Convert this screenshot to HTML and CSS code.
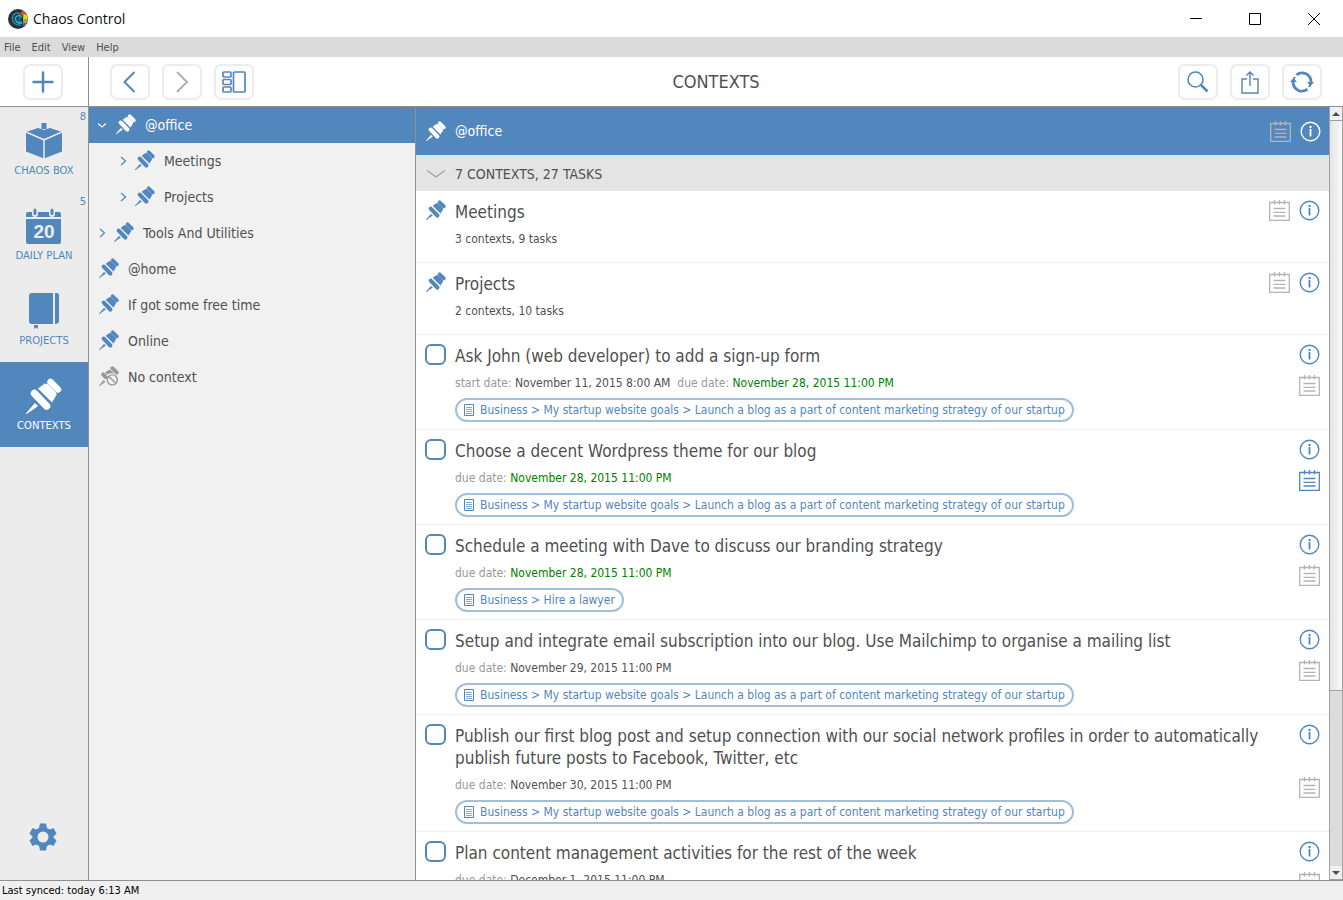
FILE: index.html
```
<!DOCTYPE html>
<html lang="en">

<head>
    <meta charset="UTF-8">
    <meta name="viewport" content="width=device-width, initial-scale=1.0">
    <title>Chaos Control</title>
    <link rel="stylesheet" href="styles.css">
</head>

<body>

    <!-- shared icons -->
    <svg class="sprite" width="0" height="0">
        <symbol id="pin" viewBox="0 0 36 36">
            <path d="M0 36L9 25.500L11.500 28Z" fill="currentColor" stroke="currentColor" />
            <path d="M8.500 15.500L20.500 28" stroke="currentColor" stroke-width="7.500" stroke-linecap="round" />
            <path d="M24.500 4L32 11.500" stroke="currentColor" stroke-width="6.500" stroke-linecap="round" />
            <path d="M19 5.500L21.500 6L30.500 15L30.500 17L26 24.500L12 10.500Z" fill="currentColor" />
        </symbol>
        <symbol id="nopin" viewBox="0 0 36 36">
            <path d="M0 36L8 26L11 28.500Z" fill="currentColor" stroke="currentColor" />
            <path d="M7.500 15L12 20" stroke="currentColor" stroke-width="7" stroke-linecap="round" />
            <path d="M24 4L32 12" stroke="currentColor" stroke-width="7" stroke-linecap="round" />
            <path d="M19.500 6.500L28 14C21 12 16 14 14 16L11.500 11Z" fill="currentColor" />
            <circle cx="24" cy="25" r="9" stroke="currentColor" stroke-width="2.500" fill="none" />
            <path d="M18 19L30 31" stroke="currentColor" stroke-width="2.500" />
        </symbol>
        <symbol id="info" viewBox="0 0 21 21">
            <circle cx="10.500" cy="10.500" r="9.300" fill="none" stroke="currentColor" stroke-width="1.400" />
            <circle cx="10.500" cy="6" r="1.200" fill="currentColor" />
            <path d="M10.500 8V15.500" fill="none" stroke="currentColor" stroke-width="1.800" />
        </symbol>
        <symbol id="notes" viewBox="0 0 21 21">
            <path d="M.7 2.500H20.300V20.300H.7ZM5.500 0V4.500M10.500 0V4.500M15.500 0V4.500M4.500 8.500H16.500M4.500 12.300H16.500M4.500 16H16.500" fill="none" stroke="currentColor" stroke-width="1.300" />
        </symbol>
        <symbol id="doc" viewBox="0 0 12 12">
            <path d="M1.500 .5H10.500V11.500H1.500Z" fill="none" stroke="currentColor" stroke-width="1" />
            <path d="M3 3.500H9M3 5.500H9M3 7.500H9M3 9.500H9" fill="none" stroke="currentColor" stroke-width=".7" />
        </symbol>
        <symbol id="right" viewBox="0 0 8 10">
            <path d="M1 1L5.500 5L1 9" fill="none" stroke="currentColor" stroke-width="1.200" />
        </symbol>
        <symbol id="down" viewBox="0 0 8 10">
            <path d="M0 3.500L4 7L8 3.500" fill="none" stroke="currentColor" stroke-width="1.200" />
        </symbol>
    </svg>

    <header class="titlebar">
        <svg width="20" height="20" viewBox="0 0 20 20" fill="none">
            <circle cx="10" cy="10" r="10" fill="#2d3135" />
            <path d="M14 1.500L17.500 4L15.500 7L13 5Z" fill="#e8562a" />
            <path d="M15.500 5L18.500 5.500L20 10H15Z" fill="#f4d21f" />
            <path d="M15 10H20L19 14L15 14Z" fill="#7db843" />
            <path d="M14 14H19L16 18Z" fill="#7a55a5" />
            <path d="M13 5C8 2.500 4 5.500 4.500 10C5 14 8 16.500 13 16" stroke="#1791b5" stroke-width="1.400" />
            <path d="M14 7.500C10 5.500 7 7.500 7.500 10.500C8 13 10 14.500 14 14" stroke="#1cb3dc" stroke-width="1.600" />
            <path d="M14 9C11.500 8.500 10.500 9.500 10.700 11C11 12.500 12.500 12.800 14 12.500" stroke="#1791b5" stroke-width="1.200" />
        </svg>
        <h1>Chaos Control</h1>
        <div class="window-buttons">
            <button type="button" aria-label="Minimize"><svg width="12" height="12" stroke="#000"><path d="M0 5.500H12" /></svg></button>
            <button type="button" aria-label="Maximize"><svg width="12" height="12" stroke="#000" fill="none"><path d="M.5 .5H11.500V11.500H.5Z" /></svg></button>
            <button type="button" aria-label="Close"><svg width="12" height="12" stroke="#000"><path d="M0 0L12 12M12 0L0 12" /></svg></button>
        </div>
    </header>

    <nav class="menubar">
        <a href="#">File</a>
        <a href="#">Edit</a>
        <a href="#">View</a>
        <a href="#">Help</a>
    </nav>

    <div class="toolbar">
        <div class="toolbar-add">
            <button type="button" class="tool" aria-label="Add"><svg width="22" height="22" stroke="currentColor" stroke-width="2.500" stroke-linecap="round"><path d="M1.500 11H20.500M11 1.500V20.500" /></svg></button>
        </div>
        <div class="toolbar-main">
            <button type="button" class="tool" aria-label="Back"><svg width="22" height="22" fill="none" stroke="currentColor" stroke-width="2"><path d="M15.500 1L5.500 11L15.500 21" /></svg></button>
            <button type="button" class="tool disabled" aria-label="Forward"><svg width="22" height="22" fill="none" stroke="currentColor" stroke-width="2"><path d="M6 1L16 11L6 21" /></svg></button>
            <button type="button" class="tool" aria-label="Layout"><svg width="24" height="22" fill="none" stroke="currentColor" stroke-width="1.700"><rect x="1" y="1" width="8" height="5" rx="1" /><rect x="1" y="8.500" width="8" height="5" rx="1" /><rect x="1" y="16" width="8" height="5" rx="1" /><rect x="11.500" y="1" width="11.500" height="20" rx="1" /></svg></button>
            <h2>CONTEXTS</h2>
            <button type="button" class="tool" aria-label="Search"><svg width="22" height="22" fill="none" stroke="currentColor"><circle cx="8.500" cy="8.500" r="7.500" stroke-width="1.600" /><path d="M14 14L20.500 20.500" stroke-width="2.500" /></svg></button>
            <button type="button" class="tool" aria-label="Share"><svg width="22" height="24" fill="none" stroke="currentColor" stroke-width="1.400"><path d="M8 9H3V23H19V9H14M11 16V2M7.500 5.500L11 2L14.500 5.500" /></svg></button>
            <button type="button" class="tool" aria-label="Sync">
                <svg width="24" height="22" fill="none" stroke="currentColor" stroke-width="2.800">
                    <path d="M6.500 3.800A9 9 0 0 1 21 11M17.500 18.200A9 9 0 0 1 3 11" />
                    <path d="M17 11H24L20.500 15ZM0 11H7L3.500 7Z" fill="currentColor" stroke="none" />
                    <path d="M3.500 9A9 9 0 0 1 5 6M20.500 13A9 9 0 0 1 19 16" stroke-width="2" />
                </svg>
            </button>
        </div>
    </div>

    <main class="content">
        <nav class="sidebar">
            <a class="nav-item" href="#">
                <span class="badge">8</span>
                <svg width="36" height="36" fill="currentColor">
                    <path d="M15.500 0H20.500V6H15.500Z" />
                    <path d="M0 9L12 5L18 7L24 5L36 9L18 16Z" />
                    <path d="M0 9L18 17V35.500L0 28.500ZM36 9L18 17V35.500L36 28.500Z" />
                    <path d="M0 9L18 17L36 9M18 17V36" fill="none" stroke="#ececec" stroke-width="1.500" />
                </svg>
                <span>CHAOS BOX</span>
            </a>
            <a class="nav-item" href="#">
                <span class="badge">5</span>
                <svg width="36" height="36" fill="currentColor">
                    <path d="M0 11H35V34Q35 36 33 36H2Q0 36 0 34ZM2 4H33Q35 4 35 6V9H0V6Q0 4 2 4Z" />
                    <path d="M9 1V6M26 1V6" fill="none" stroke="#ececec" stroke-width="6" stroke-linecap="round" />
                    <path d="M9 2V5.500M26 2V5.500" fill="none" stroke="currentColor" stroke-width="3" stroke-linecap="round" />
                    <text class="day" x="18" y="30" text-anchor="middle">20</text>
                </svg>
                <span>DAILY PLAN</span>
            </a>
            <a class="nav-item" href="#">
                <svg width="36" height="36" fill="currentColor">
                    <path d="M6 0H27V31H6Q3 31 3 28V3Q3 0 6 0ZM29 0H31Q33 0 33 3V28Q33 31 29 31ZM8 32H12V36L10 34.500L8 36Z" />
                </svg>
                <span>PROJECTS</span>
            </a>
            <a class="nav-item active" href="#">
                <svg width="36" height="36"><use href="#pin" /></svg>
                <span>CONTEXTS</span>
            </a>
            <button type="button" class="settings" aria-label="Settings">
                <svg width="28" height="28" viewBox="0 0 28 28">
                    <path d="M11 .5H17L18 5L21 6.500L24.500 5L27.500 10.500L24.500 13.500V14.500L27.500 17.500L24.500 23L21 21.500L18 23L17 27.500H11L10 23L7 21.500L3.500 23L.5 17.500L3.500 14.500V13.500L.5 10.500L3.500 5L7 6.500L10 5ZM14 8.500A5.500 5.500 0 1 0 14 19.500A5.500 5.500 0 1 0 14 8.500Z" fill="currentColor" fill-rule="evenodd" />
                </svg>
            </button>
        </nav>

        <ul class="tree">
            <li class="selected"><svg class="arrow"><use href="#down" /></svg><svg class="pin"><use href="#pin" /></svg>@office</li>
            <li class="child"><svg class="arrow"><use href="#right" /></svg><svg class="pin"><use href="#pin" /></svg>Meetings</li>
            <li class="child"><svg class="arrow"><use href="#right" /></svg><svg class="pin"><use href="#pin" /></svg>Projects</li>
            <li><svg class="arrow"><use href="#right" /></svg><svg class="pin"><use href="#pin" /></svg>Tools And Utilities</li>
            <li><svg class="pin"><use href="#pin" /></svg>@home</li>
            <li><svg class="pin"><use href="#pin" /></svg>If got some free time</li>
            <li><svg class="pin"><use href="#pin" /></svg>Online</li>
            <li><svg class="pin none"><use href="#nopin" /></svg>No context</li>
        </ul>

        <section class="details">
            <div class="details-head">
                <svg class="pin"><use href="#pin" /></svg>
                <h3>@office</h3>
                <button type="button" class="icon muted" aria-label="Notes"><svg><use href="#notes" /></svg></button>
                <button type="button" class="icon" aria-label="Info"><svg><use href="#info" /></svg></button>
            </div>
            <div class="summary">
                <svg width="18" height="8" fill="none" stroke="#a0a0a0" stroke-width="1.200"><path d="M0 .5L9 7L18 .5" /></svg>
                7 CONTEXTS, 27 TASKS
            </div>

            <article class="row group">
                <svg class="pin"><use href="#pin" /></svg>
                <div class="row-text">
                    <h4>Meetings</h4>
                    <p>3 contexts, 9 tasks</p>
                </div>
                <div class="row-icons">
                    <button type="button" class="icon muted" aria-label="Notes"><svg><use href="#notes" /></svg></button>
                    <button type="button" class="icon" aria-label="Info"><svg><use href="#info" /></svg></button>
                </div>
            </article>
            <article class="row group">
                <svg class="pin"><use href="#pin" /></svg>
                <div class="row-text">
                    <h4>Projects</h4>
                    <p>2 contexts, 10 tasks</p>
                </div>
                <div class="row-icons">
                    <button type="button" class="icon muted" aria-label="Notes"><svg><use href="#notes" /></svg></button>
                    <button type="button" class="icon" aria-label="Info"><svg><use href="#info" /></svg></button>
                </div>
            </article>

            <article class="row">
                <input type="checkbox" id="task1">
                <div class="row-text">
                    <h4><label for="task1">Ask John (web developer) to add a sign-up form</label></h4>
                    <p><span>start date:</span> November 11, 2015 8:00 AM &nbsp;<span>due date:</span> <b>November 28, 2015 11:00 PM</b></p>
                    <a class="tag" href="#"><svg><use href="#doc" /></svg>Business &gt; My startup website goals &gt; Launch a blog as a part of content marketing strategy of our startup</a>
                </div>
                <div class="row-icons">
                    <button type="button" class="icon" aria-label="Info"><svg><use href="#info" /></svg></button>
                    <button type="button" class="icon muted" aria-label="Notes"><svg><use href="#notes" /></svg></button>
                </div>
            </article>
            <article class="row">
                <input type="checkbox" id="task2">
                <div class="row-text">
                    <h4><label for="task2">Choose a decent Wordpress theme for our blog</label></h4>
                    <p><span>due date:</span> <b>November 28, 2015 11:00 PM</b></p>
                    <a class="tag" href="#"><svg><use href="#doc" /></svg>Business &gt; My startup website goals &gt; Launch a blog as a part of content marketing strategy of our startup</a>
                </div>
                <div class="row-icons">
                    <button type="button" class="icon" aria-label="Info"><svg><use href="#info" /></svg></button>
                    <button type="button" class="icon" aria-label="Notes"><svg><use href="#notes" /></svg></button>
                </div>
            </article>
            <article class="row">
                <input type="checkbox" id="task3">
                <div class="row-text">
                    <h4><label for="task3">Schedule a meeting with Dave to discuss our branding strategy</label></h4>
                    <p><span>due date:</span> <b>November 28, 2015 11:00 PM</b></p>
                    <a class="tag" href="#"><svg><use href="#doc" /></svg>Business &gt; Hire a lawyer</a>
                </div>
                <div class="row-icons">
                    <button type="button" class="icon" aria-label="Info"><svg><use href="#info" /></svg></button>
                    <button type="button" class="icon muted" aria-label="Notes"><svg><use href="#notes" /></svg></button>
                </div>
            </article>
            <article class="row">
                <input type="checkbox" id="task4">
                <div class="row-text">
                    <h4><label for="task4">Setup and integrate email subscription into our blog. Use Mailchimp to organise a mailing list</label></h4>
                    <p><span>due date:</span> November 29, 2015 11:00 PM</p>
                    <a class="tag" href="#"><svg><use href="#doc" /></svg>Business &gt; My startup website goals &gt; Launch a blog as a part of content marketing strategy of our startup</a>
                </div>
                <div class="row-icons">
                    <button type="button" class="icon" aria-label="Info"><svg><use href="#info" /></svg></button>
                    <button type="button" class="icon muted" aria-label="Notes"><svg><use href="#notes" /></svg></button>
                </div>
            </article>
            <article class="row">
                <input type="checkbox" id="task5">
                <div class="row-text">
                    <h4><label for="task5">Publish our first blog post and setup connection with our social network profiles in order to automatically publish future posts to Facebook, Twitter, etc</label></h4>
                    <p><span>due date:</span> November 30, 2015 11:00 PM</p>
                    <a class="tag" href="#"><svg><use href="#doc" /></svg>Business &gt; My startup website goals &gt; Launch a blog as a part of content marketing strategy of our startup</a>
                </div>
                <div class="row-icons">
                    <button type="button" class="icon" aria-label="Info"><svg><use href="#info" /></svg></button>
                    <button type="button" class="icon muted" aria-label="Notes"><svg><use href="#notes" /></svg></button>
                </div>
            </article>
            <article class="row last">
                <input type="checkbox" id="task6">
                <div class="row-text">
                    <h4><label for="task6">Plan content management activities for the rest of the week</label></h4>
                    <p><span>due date:</span> December 1, 2015 11:00 PM</p>
                </div>
                <div class="row-icons">
                    <button type="button" class="icon" aria-label="Info"><svg><use href="#info" /></svg></button>
                    <button type="button" class="icon muted" aria-label="Notes"><svg><use href="#notes" /></svg></button>
                </div>
            </article>
        </section>

        <div class="scrollbar">
            <button type="button" aria-label="Scroll up"><svg width="8" height="4"><path d="M0 4L4 0L8 4Z" fill="#505050" /></svg></button>
            <div class="track">
                <div class="thumb"></div>
            </div>
            <button type="button" aria-label="Scroll down"><svg width="8" height="4"><path d="M0 0L4 4L8 0Z" fill="#505050" /></svg></button>
        </div>
    </main>

    <footer class="statusbar">Last synced: today 6:13 AM</footer>

</body>

</html>
```
FILE: styles.css
```
* {
    box-sizing: border-box;
}

body {
    margin: 0;
    height: 100vh;
    display: flex;
    flex-direction: column;
    overflow: hidden;
    background: #fff;
    color: #505050;
    font-family: Tahoma, "DejaVu Sans Condensed", "Noto Sans", sans-serif;
    font-size: 14px;
}

h1, h2, h3, h4, p, ul {
    margin: 0;
    padding: 0;
    font-weight: normal;
}

a {
    color: inherit;
    text-decoration: none;
}

button {
    display: flex;
    align-items: center;
    justify-content: center;
    padding: 0;
    border: 0;
    background: none;
    color: #5287bd;
}

svg {
    flex: none;
    display: block;
}

.sprite {
    position: absolute;
}

/* window */
.titlebar {
    display: flex;
    align-items: center;
    flex: none;
    height: 37px;
    padding-left: 8px;
    gap: 5px;
}

.titlebar h1 {
    flex: 1;
    color: #111;
    font-family: "Segoe UI", "Open Sans", sans-serif;
    font-size: 14px;
}

.window-buttons {
    display: flex;
}

.window-buttons button {
    width: 59px;
    height: 36px;
}

.menubar {
    display: flex;
    align-items: center;
    flex: none;
    height: 20px;
    padding-left: 4px;
    gap: 11px;
    background: #dbdbdb;
    font-size: 11px;
}

/* toolbar */
.toolbar {
    display: flex;
    flex: none;
    height: 50px;
    border-bottom: 1px solid #8f8f8f;
}

.toolbar-add {
    display: flex;
    align-items: center;
    justify-content: center;
    width: 89px;
    padding-right: 2px;
    border-right: 1px solid #8f8f8f;
}

.toolbar-main {
    display: flex;
    flex: 1;
    align-items: center;
    gap: 12px;
    padding: 0 21px;
}

.toolbar h2 {
    flex: 1;
    text-align: center;
    font-size: 18px;
}

.tool {
    width: 40px;
    height: 36px;
    border: 2px solid #ececec;
    border-radius: 7px;
}

.tool.disabled {
    color: #b0b0b0;
}

.content {
    display: flex;
    flex: 1;
    min-height: 0;
}

/* left navigation */
.sidebar {
    display: flex;
    flex-direction: column;
    align-items: stretch;
    width: 89px;
    border-right: 1px solid #8f8f8f;
    background: #ececec;
}

.nav-item {
    position: relative;
    display: flex;
    flex-direction: column;
    align-items: center;
    gap: 6px;
    height: 85px;
    padding-top: 16px;
    color: #5287bd;
    font-family: Tahoma, "DejaVu Sans", sans-serif;
    font-size: 10px;
    line-height: 12px;
}

.nav-item.active {
    background: #5287bd;
    color: #fff;
}

.badge {
    position: absolute;
    top: 4px;
    right: 2px;
}

.day {
    fill: #ececec;
    font-family: "Liberation Sans", Arial, sans-serif;
    font-size: 19px;
    font-weight: bold;
}

.settings {
    margin: auto 2px 29px 0;
}

/* contexts tree */
.tree {
    width: 327px;
    border-right: 1px solid #8f8f8f;
    background: #f1f1f1;
    list-style: none;
}

.tree li {
    display: flex;
    align-items: center;
    height: 36px;
    padding-left: 10px;
}

.tree .child {
    padding-left: 31px;
}

.tree .selected {
    padding-left: 9px;
    background: #5287bd;
    color: #fff;
}

.pin {
    width: 20px;
    height: 20px;
    color: #5287bd;
}

.tree .pin {
    margin: 0 9px 2px 0;
}

.selected .pin, .selected .arrow, .details-head .pin {
    color: #fff;
}

.pin.none {
    color: #999;
}

.arrow {
    width: 8px;
    height: 10px;
    margin-right: 7px;
    color: #5287bd;
}

.selected .arrow {
    margin-right: 10px;
}

/* task list */
.details {
    flex: 1;
    min-width: 0;
    overflow: hidden;
}

.details-head, .summary {
    display: flex;
    align-items: center;
}

.details-head {
    gap: 9px;
    height: 48px;
    padding: 0 8px 0 10px;
    background: #5287bd;
    color: #fff;
}

.details-head h3 {
    flex: 1;
    font-size: 14px;
}

.details-head .icon {
    color: #fff;
}

.summary {
    gap: 10px;
    height: 36px;
    padding: 1px 0 0 11px;
    background: #e4e4e4;
}

.row {
    display: flex;
    align-items: flex-start;
    gap: 9px;
    padding: 9px 9px 7px;
    border-bottom: 1px solid #efefef;
}

.row.group {
    padding: 9px 9px 15px 10px;
}

.row.last {
    padding-bottom: 38px;
}

.row-text {
    flex: 1;
    min-width: 0;
    padding-top: 1px;
}

.row h4 {
    font-size: 17px;
    line-height: 22px;
}

.row p {
    margin-top: 8px;
    font-size: 12px;
    line-height: 16px;
}

.row p span {
    color: #999;
}

.row p b {
    color: #008000;
    font-weight: normal;
}

.row input {
    appearance: none;
    flex: none;
    width: 21px;
    height: 21px;
    margin: 0;
    border: 2px solid #5287bd;
    border-radius: 6px;
    background: #fff;
}

.row-icons {
    display: flex;
    flex-direction: column;
    align-self: stretch;
    justify-content: space-between;
    padding-bottom: 26px;
}

.group .row-icons {
    flex-direction: row;
    gap: 9px;
    padding: 0;
}

.last .row-icons {
    justify-content: flex-start;
    gap: 10px;
    padding: 0;
}

.icon, .icon svg {
    width: 21px;
    height: 21px;
}

.icon.muted, .details-head .icon.muted {
    color: #b4b4b4;
}

.tag {
    display: inline-flex;
    align-items: center;
    gap: 5px;
    height: 24px;
    margin-top: 7px;
    padding: 0 7px 0 6px;
    border: 2px solid #a0bfde;
    border-radius: 12px;
    color: #5287bd;
    font-size: 12px;
    vertical-align: top;
}

.tag svg {
    width: 12px;
    height: 12px;
}

.scrollbar {
    display: flex;
    flex-direction: column;
    width: 14px;
    border: 1px solid #a0a0a0;
    border-width: 0 1px;
    background: #dcdcdc;
}

.scrollbar button {
    height: 14px;
    background: #f0f0f0;
    border-bottom: 1px solid #a0a0a0;
}

.track {
    flex: 1;
}

.thumb {
    height: 76.500%;
    border-bottom: 1px solid #a0a0a0;
    background: linear-gradient(to right, #e4e4e4, #f8f8f8);
}

.statusbar {
    display: flex;
    align-items: center;
    flex: none;
    height: 20px;
    padding-left: 2px;
    border-top: 1px solid #8f8f8f;
    background: #f0f0f0;
    color: #000;
    font-size: 11px;
}
```
